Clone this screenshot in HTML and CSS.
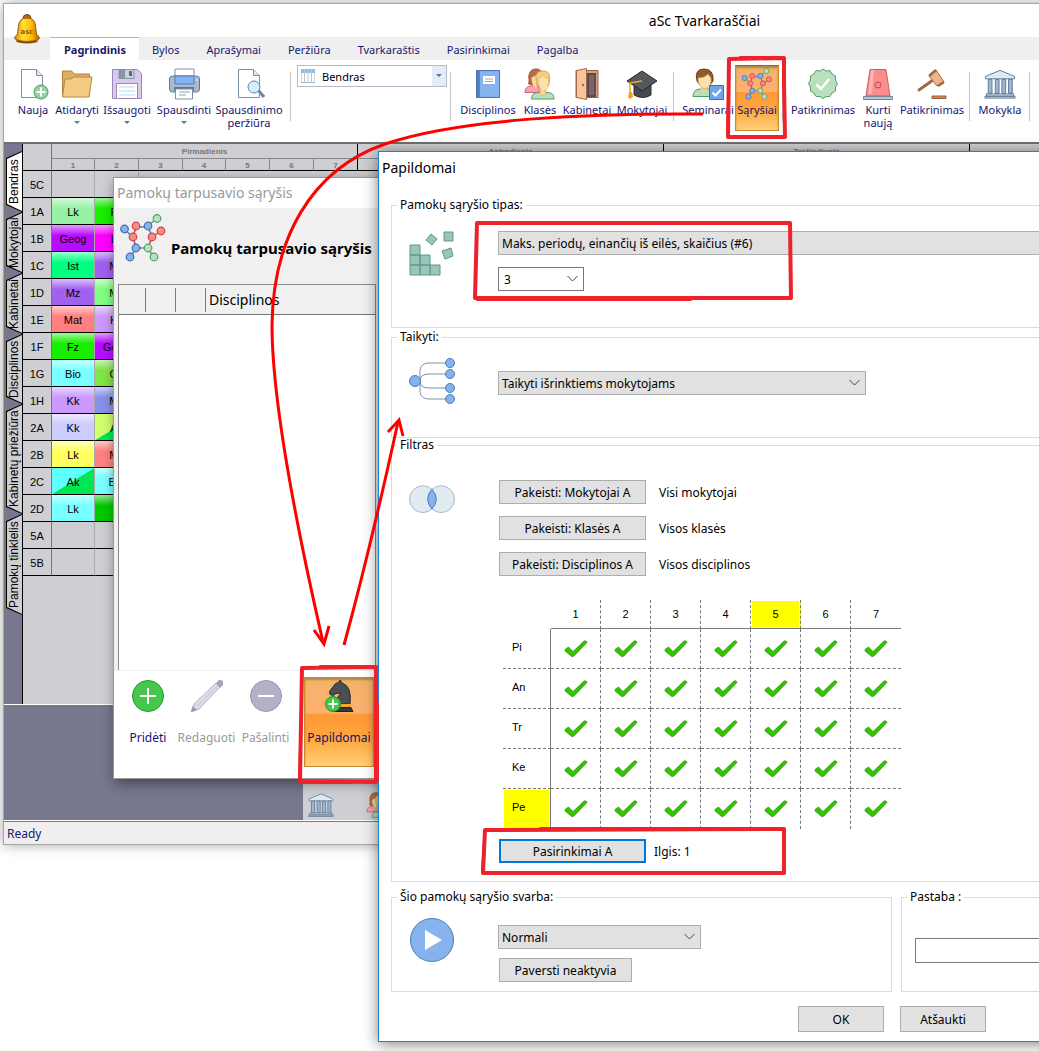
FILE: index.html
```html
<!DOCTYPE html>
<html lang="lt">
<head>
  <meta charset="UTF-8">
  <meta name="viewport" content="width=device-width, initial-scale=1.0">
  <title>aSc Tvarkaraščiai</title>
  <link rel="stylesheet" href="styles.css">
</head>
<body>

<!-- shared icons -->
<svg class="defs" aria-hidden="true">
  <symbol id="check" viewBox="0 0 24 20">
    <path d="M1 10.500 4.500 8l4.500 4.500L20 2q2.500-1 3 1.500L10 17q-2 1.500-3 0L1 12z" fill="#35c203" stroke="#2a9a10" stroke-width=".7"/>
  </symbol>
  <symbol id="molecule" viewBox="0 0 46 48">
    <g stroke="#4f7fb8" stroke-width="1.500" fill="none">
      <path d="M4 15l9 8M16 13h12M32 23l-4-11M10 44l6-10"/>
      <path d="M16 13l-3 10 3 11M32 23l9-6M32 23l-4 11" stroke="#d04848"/>
      <path d="M28 12l9-8M16 34h12l6 10" stroke="#5a9a74"/>
    </g>
    <g stroke-width="1.200">
      <g fill="#86b3ee" stroke="#3e6fb0"><circle cx="4.500" cy="15" r="3.800"/><circle cx="28" cy="12" r="3.800"/><circle cx="16" cy="34" r="3.800"/><circle cx="10" cy="43" r="3.800"/></g>
      <g fill="#f88a8a" stroke="#cf4444"><circle cx="16" cy="12" r="3.800"/><circle cx="41" cy="17" r="3.800"/><circle cx="32" cy="23" r="3.800"/><circle cx="13" cy="23" r="3.800"/></g>
      <g fill="#b8e2bc" stroke="#5a9a74"><circle cx="37" cy="4.500" r="3.800"/><circle cx="28" cy="34" r="3.800"/><circle cx="34" cy="43" r="3.800"/></g>
    </g>
  </symbol>
  <symbol id="people" viewBox="0 0 34 34">
    <path d="M1 26q0-6 6-7h9v7z" fill="#f6a5ae" stroke="#d5556a"/>
    <path d="M5 17q1-4 0-8 1-8 8-8 6 0 6 7l-5 10z" fill="#b96b42" stroke="#8f4c2a"/>
    <path d="M8 10q4-1 6-4l4 4-2 8-4 3q-4-3-4-11z" fill="#fbd9a0"/>
    <path d="M8 33q0-7 7-7h10q7 0 7 7z" fill="#b8e0b8" stroke="#4f9a62"/>
    <path d="M17 22h6v6q-3 3-6 0z" fill="#fbd9a0" stroke="#dba45a" stroke-width=".7"/>
    <path d="M13 14q-2-11 7-11t7 11l-1 5h-12z" fill="#f3cf7c" stroke="#c79a44" stroke-width=".8"/>
    <path d="M15 11q3 0 5-3 3 3 6 3 1 12-5 14-6-2-6-14z" fill="#fde0ae" stroke="#dba45a" stroke-width=".6"/>
  </symbol>
  <symbol id="school" viewBox="0 0 34 32">
    <g fill="#c8d7e6" stroke="#5d7892">
      <path d="M17 1.500 32.500 8v2.500h-31V8z" fill="#dcecf7"/>
      <path d="M4.500 11h4v15h-4zM12 11h4v15h-4zM19 11h4v15h-4zM26 11h4v15h-4z" fill="#9fb7cf"/>
      <path d="M2.500 26.500h29V29h-29zM1 29h32v2H1z"/>
    </g>
  </symbol>
</svg>

<div class="desktop">

  <div class="window main">
    <header class="titlebar">
      <svg class="bell" viewBox="0 0 28 30" aria-hidden="true">
        <defs>
          <linearGradient id="gold"><stop offset="0" stop-color="#d98500"/><stop offset=".35" stop-color="#ffe23a"/><stop offset=".7" stop-color="#ffb400"/><stop offset="1" stop-color="#b35c00"/></linearGradient>
        </defs>
        <ellipse cx="14" cy="27" rx="11" ry="2.500" fill="#8c4a10"/>
        <circle cx="14" cy="4.500" r="4" fill="#b56a10" stroke="#7a4508"/>
        <path d="M14 4q8 0 8.500 8l1 8 3 3.500q1 3-12.500 4-13.500-1-12.500-4l3-3.500 1-8Q6 4 14 4z" fill="url(#gold)" stroke="#a85a08"/>
        <text x="14" y="20" text-anchor="middle" class="bell-text">asc</text>
      </svg>
      <span>aSc Tvarkaraščiai</span>
    </header>

    <nav class="tabs">
      <a href="#" class="active">Pagrindinis</a>
      <a href="#">Bylos</a>
      <a href="#">Aprašymai</a>
      <a href="#">Peržiūra</a>
      <a href="#">Tvarkaraštis</a>
      <a href="#">Pasirinkimai</a>
      <a href="#">Pagalba</a>
    </nav>

    <div class="ribbon">
      <div class="group files">
        <button class="tool">
          <svg viewBox="0 0 32 32"><path d="M4.500 1.500h15l6 6v22h-21z" fill="#fff" stroke="#7d8fa3"/><path d="M19.500 1.500v6h6" fill="#dfe7ef" stroke="#7d8fa3"/><circle cx="24" cy="24" r="7" fill="#92d3a0" stroke="#4f9a62"/><path d="M24 19.500v9M19.500 24h9" stroke="#fff" stroke-width="2"/></svg>
          Nauja
        </button>
        <button class="tool drop">
          <svg viewBox="0 0 32 32"><path d="M1.500 28V3h9l3 3h15v22z" fill="#dfad62" stroke="#b07f3c"/><path d="M1.500 29 4 11h6l3-2h18l-3 20z" fill="#f3cb82" stroke="#b98a45"/></svg>
          Atidaryti
        </button>
        <button class="tool drop">
          <svg viewBox="0 0 32 32"><path d="M1.500 1.500h25l4 4v25h-29z" fill="#d7cbee" stroke="#9c86c0"/><path d="M8 1.500h15v9H8z" fill="#c9d3dc" stroke="#8595a5"/><path d="M8 1.500h6v9H8z" fill="#8795a3"/><path d="M18 3h3v5h-3z" fill="#5b6a78"/><path d="M5.500 15.500h21v15h-21z" fill="#fff" stroke="#9c86c0"/><path d="M8 19h16M8 23h16M8 27h16" stroke="#b5def5"/></svg>
          Išsaugoti
        </button>
        <button class="tool drop">
          <svg viewBox="0 0 32 32"><path d="M7 1h19v10H7z" fill="#fff" stroke="#7d8fa3"/><rect x="1.500" y="8" width="30" height="16" rx="3" fill="#a9bad0" stroke="#5f7896"/><path d="M7 8h19v8H7z" fill="#86b3ee" stroke="#4c7cb8"/><path d="M6 19h20v4H6z" fill="#5f7896"/><path d="M7.500 21h17v10h-17z" fill="#fff" stroke="#7d8fa3"/><path d="M11 24h11M11 27h7" stroke="#8fa3b7"/><circle cx="29" cy="12" r="1" fill="#ffe48a"/></svg>
          Spausdinti
        </button>
        <button class="tool">
          <svg viewBox="0 0 32 32"><path d="M5.500 1.500h15l6 6v22h-21z" fill="#fff" stroke="#7d8fa3"/><path d="M20.500 1.500v6h6" fill="#dfe7ef" stroke="#7d8fa3"/><path d="m25 22 6 7" stroke="#71869b" stroke-width="3"/><circle cx="21" cy="19" r="6" fill="#d4edff" stroke="#5f86ad"/></svg>
          Spausdinimo peržiūra
        </button>
      </div>

      <div class="group view">
        <div class="view-box">
          <svg viewBox="0 0 14 14" aria-hidden="true"><path d="M0 .5h14v13H0z" fill="#fff" stroke="#9fb0c0"/><path d="M0 0h14v4H0z" fill="#8ac0ea"/><path d="M3.500 0v14M7 0v14M10.500 0v14" stroke="#b9c6d2"/></svg>
          <select aria-label="Vaizdas"><option>Bendras</option></select>
        </div>
      </div>

      <div class="group subjects">
        <button class="tool">
          <svg viewBox="0 0 32 32"><path d="M4.500 2.500h23v27h-23z" fill="#86b3ee" stroke="#4474b4"/><path d="M5 3h3v26H5z" fill="#4f80c0"/><path d="M11 8h12v8H11z" fill="#fff"/><path d="M13 11h8M13 13.500h8" stroke="#9aa9b8"/></svg>
          Disciplinos
        </button>
        <button class="tool"><svg viewBox="0 0 34 34"><use href="#people"/></svg>Klasės</button>
        <button class="tool">
          <svg viewBox="0 0 32 32"><path d="M5 2.500h22v27H5z" fill="#d8a07c" stroke="#9a6244"/><path d="M14 5h11v24H14z" fill="#5d4a50"/><path d="M18 7h5v20h-5z" fill="#7b636a"/><path d="m5.500 2.500 10-2v31l-10-2z" fill="#f9c49a" stroke="#a3694a"/><circle cx="12" cy="17" r="1.200" fill="#a3694a"/></svg>
          Kabinetai
        </button>
        <button class="tool">
          <svg viewBox="0 0 32 32"><path d="M8 15h17v12q-8 5-17 0z" fill="#45484c" stroke="#2c2f33"/><path d="M16 3 31 13 16 23 1 13z" fill="#55585c" stroke="#232629"/><path d="m16 13-12 2v10" fill="none" stroke="#f2a126" stroke-width="1.500"/><path d="M3 24h3l1 5-3 2-2-2z" fill="#f2a126"/></svg>
          Mokytojai
        </button>
      </div>

      <div class="group relations">
        <button class="tool">
          <svg viewBox="0 0 32 32"><path d="M1 28.500q0-7 7-7.500h8q6 0 7 7.500z" fill="#b8e0b8" stroke="#4f9a62"/><path d="M9 17h6v6q-3 2-6 0z" fill="#f5cf96"/><path d="M5 13Q2 1 12 1t9 12l-3 4H8z" fill="#92592f" stroke="#6d3e1c"/><path d="M6 10q7 0 10-4l3 4q1 9-6 11-7-2-7-11z" fill="#fde0ae" stroke="#cf9c58" stroke-width=".7"/><path d="M17.500 17.500h14v14h-14z" fill="#6fa5ec" stroke="#3e6fb0"/><path d="m20.500 24.500 3 3 5.500-6" fill="none" stroke="#fff" stroke-width="2"/></svg>
          Seminarai
        </button>
        <button class="tool pressed"><svg viewBox="0 0 46 48"><use href="#molecule"/></svg>Sąryšiai</button>
      </div>

      <div class="group checks">
        <button class="tool">
          <svg viewBox="0 0 32 32"><path d="m16 1 3 2 4-.5 2 3.500 3.500 2 0 4 2 3.500-2 3.500 0 4-3.500 2-2 3.500-4 0-3 2-3-2-4 0-2-3.500-3.500-2 0-4-2-3.500 2-3.500 0-4L7 6l2-3.500 4 .5z" fill="#b8e0bc" stroke="#5a9a74"/><path d="m9.500 16.500 4.500 4.500L22 11" fill="none" stroke="#fff" stroke-width="2.500"/></svg>
          Patikrinimas
        </button>
        <button class="tool">
          <svg viewBox="0 0 32 32"><path d="M8 1.500h16L28 28H4z" fill="#f98e8e" stroke="#dd5757"/><path d="m9 2-3 24h4l2-24z" fill="#fcb4b4"/><circle cx="16" cy="17" r="3" fill="none" stroke="#d04545"/><path d="M1.500 28.500h29v3h-29z" fill="#b8c4d2" stroke="#71869b"/></svg>
          Kurti naują
        </button>
        <button class="tool">
          <svg viewBox="0 0 32 32"><path d="M3 22 17 12" stroke="#a5673f" stroke-width="3" stroke-linecap="round"/><path d="m13 8 7-6 8 12-7 4z" fill="#f0b48c" stroke="#a5673f"/><path d="m13 8 7-6M22 18l6-4" stroke="#a5673f" stroke-width="2.500"/><path d="M16 28h14v2.500H16z" fill="#c98a5e" stroke="#9a5f3b"/></svg>
          Patikrinimas
        </button>
      </div>

      <div class="group schools">
        <button class="tool"><svg viewBox="0 0 34 32"><use href="#school"/></svg>Mokykla</button>
      </div>
    </div>

    <div class="workspace">
      <nav class="side-tabs">
        <button class="t1 active"><span>Bendras</span></button>
        <button class="t1"><span>Mokytojai</span></button>
        <button class="t1"><span>Kabinetai</span></button>
        <button class="t2"><span>Disciplinos</span></button>
        <button class="t4"><span>Kabinetų priežiūra</span></button>
        <button class="t3"><span>Pamokų tinklelis</span></button>
      </nav>

      <table class="timetable">
        <colgroup>
          <col class="head"><col class="narrow"><col><col><col class="narrow"><col><col><col>
          <col class="day"><col class="day"><col class="day">
        </colgroup>
        <thead>
          <tr class="days"><th rowspan="2"></th><th colspan="7">Pirmadienis</th><th>Antradienis</th><th>Trečiadienis</th><th></th></tr>
          <tr class="periods"><th>1</th><th>2</th><th>3</th><th>4</th><th>5</th><th>6</th><th>7</th><th></th><th></th><th></th></tr>
        </thead>
        <tbody>
          <tr><th>5C</th><td></td><td></td><td colspan="8"></td></tr>
          <tr><th>1A</th><td class="c mint">Lk</td><td class="c green">Fz</td><td colspan="8"></td></tr>
          <tr><th>1B</th><td class="c purple">Geog</td><td class="c magenta">Lk</td><td colspan="8"></td></tr>
          <tr><th>1C</th><td class="c spring">Ist</td><td class="c violet">Mz</td><td colspan="8"></td></tr>
          <tr><th>1D</th><td class="c violet">Mz</td><td class="c light-green">Mz</td><td colspan="8"></td></tr>
          <tr><th>1E</th><td class="c salmon">Mat</td><td class="c lilac">Kk</td><td colspan="8"></td></tr>
          <tr><th>1F</th><td class="c green">Fz</td><td class="c purple">Geog</td><td colspan="8"></td></tr>
          <tr><th>1G</th><td class="c cyan">Bio</td><td class="c lime">Ch</td><td colspan="8"></td></tr>
          <tr><th>1H</th><td class="c lilac">Kk</td><td class="c blue">Mz</td><td colspan="8"></td></tr>
          <tr><th>2A</th><td class="c lavender">Kk</td><td class="c split-lime">Ak</td><td colspan="8"></td></tr>
          <tr><th>2B</th><td class="c yellow">Lk</td><td class="c salmon">Mz</td><td colspan="8"></td></tr>
          <tr><th>2C</th><td class="c split-cyan">Ak</td><td class="c cyan">Bio</td><td colspan="8"></td></tr>
          <tr><th>2D</th><td class="c cyan">Lk</td><td class="c dark-green">It</td><td colspan="8"></td></tr>
          <tr><th>5A</th><td></td><td></td><td colspan="8"></td></tr>
          <tr><th>5B</th><td></td><td></td><td colspan="8"></td></tr>
        </tbody>
      </table>
    </div>

    <div class="lower">
      <div class="tray">
        <svg viewBox="0 0 34 32"><use href="#school"/></svg>
        <svg viewBox="0 0 34 34"><use href="#people"/></svg>
      </div>
    </div>
    <footer class="status">Ready</footer>
  </div>

  <section class="window relations-dialog">
    <div class="caption">Pamokų tarpusavio sąryšis</div>
    <div class="relations-head">
      <svg viewBox="0 0 46 48" aria-hidden="true"><use href="#molecule"/></svg>
      <h2>Pamokų tarpusavio sąryšis</h2>
    </div>
    <div class="list">
      <div class="list-head"><i></i><i></i><i></i><span>Disciplinos</span></div>
    </div>
    <div class="actions">
      <button class="action">
        <svg viewBox="0 0 32 32"><circle cx="16" cy="16" r="15.500" fill="#46c64c" stroke="#17a020"/><path d="M16 8v16M8 16h16" stroke="#fff" stroke-width="2"/></svg>
        Pridėti
      </button>
      <button class="action" disabled>
        <svg viewBox="0 0 32 32"><path d="m3 24 22-21 4 4L8 29l-8 3z" fill="#dedde6" stroke="#b4b2c2"/><path d="m25 3 3-3q6 0 4 5l-3 3z" fill="#a5a3b6"/><path d="m2 26 4 4-6 2z" fill="#9c9aae"/><path d="M5.500 26.500 27 5.500" stroke="#c3c1d0"/></svg>
        Redaguoti
      </button>
      <button class="action" disabled>
        <svg viewBox="0 0 32 32"><circle cx="16" cy="16" r="15.500" fill="#b4b1c6" stroke="#9996b0"/><path d="M8 16h16" stroke="#fff" stroke-width="2"/></svg>
        Pašalinti
      </button>
      <button class="action pressed">
        <svg viewBox="0 0 32 32"><path d="M17 0l2 3q10 3 8 21H13q0-6 5-11l-5 .5-3 2-3-1-.5-3 6-8 3-1z" fill="#4b4e52" stroke="#2a2c2f"/><path d="M13 24h15v3H13z" fill="#f5a52c"/><path d="M12 27.500h16l2 4H10z" fill="#37393c" stroke="#222"/><circle cx="10" cy="24" r="7.500" fill="#46c64c" stroke="#17a020"/><path d="M10 19.500v9M5.500 24h9" stroke="#fff" stroke-width="2"/></svg>
        Papildomai
      </button>
    </div>
  </section>

  <form class="window details">
    <div class="caption">Papildomai</div>

    <fieldset class="type">
      <legend>Pamokų sąryšio tipas:</legend>
      <svg class="pic" viewBox="0 0 46 46" aria-hidden="true">
        <g fill="#9bc5b8" stroke="#5b9a8a"><path d="M1 14h10v10H1zM1 24h10v10H1zM11 24h10v10H11zM1 34h10v10H1zM11 34h10v10H11zM21 34h10v10H21zM35 1h9v9h-9zM22 3l6 5-5 6-6-5zM33 20l9-3 2 8-8 3z"/></g>
      </svg>
      <div class="stack">
        <select class="wide" aria-label="Pamokų sąryšio tipas"><option>Maks. periodų, einančių iš eilės, skaičius (#6)</option></select>
        <select class="count" aria-label="Skaičius"><option>3</option></select>
      </div>
    </fieldset>

    <fieldset class="apply">
      <legend>Taikyti:</legend>
      <svg class="pic" viewBox="0 0 46 46" aria-hidden="true">
        <path d="M11 23V12q1-7 9-7h16M11 23q0-7 9-7h16M11 23q0 7 9 7h16M11 23v11q1 7 9 7h16" fill="none" stroke="#7d93a8"/>
        <g fill="#86b3ee" stroke="#4c7cb8"><circle cx="6" cy="23" r="5.500"/><circle cx="41" cy="5" r="4.500"/><circle cx="41" cy="16" r="4.500"/><circle cx="41" cy="30" r="4.500"/><circle cx="41" cy="41" r="4.500"/></g>
      </svg>
      <select class="teachers" aria-label="Taikyti"><option>Taikyti išrinktiems mokytojams</option></select>
    </fieldset>

    <fieldset class="filter">
      <legend>Filtras</legend>
      <svg class="pic" viewBox="0 0 48 46" aria-hidden="true">
        <g fill="#e0eaf1" stroke="#a3b7cb"><circle cx="14.500" cy="19" r="14"/><circle cx="33.500" cy="19" r="14"/></g>
        <path d="M24 8.700q9 10 0 20.600q-9-10.600 0-20.600z" fill="#86b3ee" stroke="#4c7cb8"/>
      </svg>
      <div class="stack">
        <div class="line"><button type="button" class="btn change">Pakeisti: Mokytojai A</button>Visi mokytojai</div>
        <div class="line"><button type="button" class="btn change">Pakeisti: Klasės A</button>Visos klasės</div>
        <div class="line"><button type="button" class="btn change">Pakeisti: Disciplinos A</button>Visos disciplinos</div>

        <table class="week">
          <thead>
            <tr><td></td><th>1</th><th>2</th><th>3</th><th>4</th><th class="mark">5</th><th>6</th><th>7</th></tr>
          </thead>
          <tbody>
            <tr><th>Pi</th><td><svg><use href="#check"/></svg></td><td><svg><use href="#check"/></svg></td><td><svg><use href="#check"/></svg></td><td><svg><use href="#check"/></svg></td><td><svg><use href="#check"/></svg></td><td><svg><use href="#check"/></svg></td><td><svg><use href="#check"/></svg></td></tr>
            <tr><th>An</th><td><svg><use href="#check"/></svg></td><td><svg><use href="#check"/></svg></td><td><svg><use href="#check"/></svg></td><td><svg><use href="#check"/></svg></td><td><svg><use href="#check"/></svg></td><td><svg><use href="#check"/></svg></td><td><svg><use href="#check"/></svg></td></tr>
            <tr><th>Tr</th><td><svg><use href="#check"/></svg></td><td><svg><use href="#check"/></svg></td><td><svg><use href="#check"/></svg></td><td><svg><use href="#check"/></svg></td><td><svg><use href="#check"/></svg></td><td><svg><use href="#check"/></svg></td><td><svg><use href="#check"/></svg></td></tr>
            <tr><th>Ke</th><td><svg><use href="#check"/></svg></td><td><svg><use href="#check"/></svg></td><td><svg><use href="#check"/></svg></td><td><svg><use href="#check"/></svg></td><td><svg><use href="#check"/></svg></td><td><svg><use href="#check"/></svg></td><td><svg><use href="#check"/></svg></td></tr>
            <tr><th class="mark">Pe</th><td><svg><use href="#check"/></svg></td><td><svg><use href="#check"/></svg></td><td><svg><use href="#check"/></svg></td><td><svg><use href="#check"/></svg></td><td><svg><use href="#check"/></svg></td><td><svg><use href="#check"/></svg></td><td><svg><use href="#check"/></svg></td></tr>
          </tbody>
        </table>

        <div class="line tight"><button type="button" class="btn change focused">Pasirinkimai A</button>Ilgis: 1</div>
      </div>
    </fieldset>

    <div class="bottom">
      <fieldset class="weight">
        <legend>Šio pamokų sąryšio svarba:</legend>
        <svg class="pic" viewBox="0 0 46 46" aria-hidden="true"><circle cx="23" cy="23" r="21.500" fill="#86b3ee" stroke="#4c7cb8"/><path d="m16 13 17 10-17 10z" fill="#fff"/></svg>
        <div class="stack">
          <select class="normal" aria-label="Svarba"><option>Normali</option></select>
          <button type="button" class="btn inactive">Paversti neaktyvia</button>
        </div>
      </fieldset>
      <fieldset class="note">
        <legend>Pastaba :</legend>
        <input type="text" aria-label="Pastaba">
      </fieldset>
    </div>

    <div class="buttons">
      <button type="button" class="btn">OK</button>
      <button type="button" class="btn">Atšaukti</button>
    </div>
  </form>

  <!-- red marker drawings over the windows -->
  <svg class="marker" viewBox="0 0 1039 1051" aria-hidden="true">
    <g class="arrow">
      <path d="M703 114C600 113 460 118 385 144C310 170 273 240 272 325C272 400 295 520 323 642"/>
      <path d="M314 630l10 14 5-18"/>
      <path d="M344 645Q370 550 398 422"/>
      <path d="M388 432l11-12 4 16"/>
    </g>
    <g class="box">
      <path d="M729 59L784 58 784 84 785 137 728 137z"/>
      <path d="M740 57h44M785 84v52M729 138h38M727 136l2-70"/>
      <path d="M477 223L790 223 791 298 475 298z"/>
      <path d="M500 222h289M791 247v51M477 300h214M475 296l2-60"/>
      <path d="M302 668L376 667 376 782 300 781z"/>
      <path d="M320 666h56M378 703v78M302 783h50M299 780l2-70"/>
      <path d="M485 830L784 829 784 873 483 873z"/>
      <path d="M540 828h243M785 843v30M485 874h204M482 870l2-30"/>
    </g>
  </svg>
</div>

</body>
</html>
```
FILE: styles.css
```css
* { box-sizing: border-box; }

body {
  margin: 0;
  background: #fff;
  font-family: "Noto Sans", "Open Sans", sans-serif;
  font-size: 12px;
  color: #000;
}

button, select, input { font: inherit; color: inherit; }
button { padding: 0; }

.defs { display: none; }

.desktop {
  position: relative;
  min-height: 100vh;
  overflow: hidden;
}

.window { position: absolute; }

/* main window */
.main {
  left: 3px;
  right: -367px;
  top: 3px;
  border: 1px solid #a5a5a5;
  background: #fff;
  box-shadow: 0 0 12px rgba(0, 0, 0, .35);
}

.titlebar {
  position: relative;
  height: 33px;
  display: flex;
  align-items: center;
  justify-content: center;
  font-size: 14px;
}

.bell {
  position: absolute;
  left: 9px;
  top: 10px;
  width: 28px;
  height: 30px;
}

.bell-text {
  font: bold 7px "DejaVu Sans", sans-serif;
  fill: #9a5a08;
}

.tabs {
  display: flex;
  height: 23px;
  padding-left: 46px;
  background: #efefef;
}

.tabs a {
  padding: 0 14px 0 13px;
  font-size: 11px;
  line-height: 26px;
  color: #15206c;
  text-decoration: none;
}

.tabs .active {
  padding: 0 13px 0 14px;
  background: #fff;
  border-top: 1px solid #b5b5b5;
  font-weight: bold;
  line-height: 24px;
}

.ribbon {
  display: flex;
  height: 82px;
  padding-left: 7px;
}

.group {
  position: relative;
  display: grid;
  align-items: start;
  padding: 5px 6px 0 6px;
}

.group::after {
  content: "";
  position: absolute;
  right: 0;
  top: 12px;
  height: 49px;
  border-right: 1px solid #c3c3c3;
}

.files { grid-template-columns: 44px 44px 56px 58px 72px; padding-left: 0; }
.view { grid-template-columns: 150px; padding-right: 4px; }
.subjects { grid-template-columns: 62px 42px 52px 58px; padding-right: 3px; }
.relations { grid-template-columns: 54px 44px; padding-left: 7px; padding-right: 4px; }
.checks { grid-template-columns: 64px 46px 62px; padding-left: 8px; padding-right: 7px; }
.schools { grid-template-columns: 48px; }

.tool, .action {
  display: flex;
  flex-direction: column;
  align-items: center;
  border: 0;
  background: none;
  color: #15156e;
}

.tool {
  height: 66px;
  font-size: 11px;
  line-height: 13px;
}

.tool svg {
  flex: none;
  width: 32px;
  height: 32px;
  margin: 3px 0;
}

.drop::after {
  content: "";
  margin-top: 5px;
  border: 3px solid transparent;
  border-top-color: #4a7ab8;
  border-bottom: 0;
}

.pressed {
  background: linear-gradient(#f0b468, #ffb070 40%, #ff9838 41%, #ffa83c 70%, #ffd07a);
  border: 1px solid #c98a2c;
  border-top-color: #8a6c3c;
  box-shadow: inset 0 2px 2px rgba(90, 60, 10, .4);
}

.tool.pressed svg { margin-top: 2px; }

.view-box {
  display: flex;
  align-items: center;
  height: 22px;
  padding-left: 3px;
  border: 1px solid #b4bccb;
}

.view-box svg { width: 14px; height: 14px; }

.view-box select {
  flex: 1;
  height: 20px;
  padding: 0 7px;
  border: 0;
  appearance: none;
  font-size: 11px;
  background: url("data:image/svg+xml,%3Csvg xmlns='http://www.w3.org/2000/svg' width='14' height='20'%3E%3Cpath d='M0 0h14v20H0z' fill='%23e6ebf5'/%3E%3Cpath d='M4 8h6l-3 3z' fill='%234a7ab8'/%3E%3C/svg%3E") right no-repeat #fff;
}

.workspace {
  display: flex;
  height: 562px;
  border-top: 2px solid #6f6f72;
  border-left: 1px solid #777;
  background: #cfced3;
}

.side-tabs {
  width: 18px;
  padding: 7px 0 0 1px;
  background: #77778f;
  border-right: 1px solid #000;
  display: flex;
  flex-direction: column;
}

.side-tabs button {
  border: 0;
  background: #000;
  padding: 1px 0 1px 1px;
  font: 12px/14px "Liberation Sans", Arial, sans-serif;
  clip-path: polygon(0 7px, 100% 0, 100% 100%, 0 calc(100% - 7px));
}

.side-tabs span {
  display: block;
  width: 100%;
  height: 100%;
  writing-mode: vertical-rl;
  transform: rotate(180deg);
  text-align: center;
  background: #cfced3;
  clip-path: polygon(0 0, 100% 7px, 100% calc(100% - 7px), 0 100%);
}

.side-tabs .active span { background: #fff; }
.t1 { height: 61px; }
.t2 { height: 70px; }
.t3 { height: 101px; }
.t4 { height: 110px; }

.timetable {
  align-self: flex-start;
  width: 1253px;
  table-layout: fixed;
  border-spacing: 0;
  font: 11px "Liberation Sans", Arial, sans-serif;
}

.timetable col { width: 44px; }
.timetable .narrow { width: 43px; }
.timetable .head { width: 29px; }
.timetable .day { width: 306px; }

.timetable th, .timetable td {
  padding: 1px 0 0;
  text-align: center;
  border-right: 1px solid #aaa;
  border-bottom: 1px solid #000;
  font-weight: normal;
}

.timetable tbody tr { height: 27px; }
.timetable tbody th { border-right-color: #777; }

.timetable thead th {
  color: #77777c;
  font-size: 8px;
  font-weight: bold;
}

.timetable .days { height: 15px; }
.timetable .periods { height: 12px; }
.timetable .days th { border-right-color: #000; border-bottom-color: #888; }
.timetable .days th:first-child { border-right-color: #777; border-bottom-color: #000; }
.timetable .periods th { border-right-color: #888; }
.timetable .periods th:nth-child(n+7) { border-right-color: #000; }

.c { background-image: linear-gradient(rgba(255, 255, 255, .6), rgba(255, 255, 255, 0) 40%); }
.mint { background-color: #96f0a6; }
.green { background-color: #18ee00; }
.purple { background-color: #b80cff; }
.magenta { background-color: #ff00ff; }
.spring { background-color: #00ff80; }
.violet { background-color: #a060f0; }
.light-green { background-color: #80ff80; }
.salmon { background-color: #ff8080; }
.lilac { background-color: #cc99ff; }
.cyan { background-color: #78ffff; }
.lime { background-color: #80e548; }
.blue { background-color: #8890e8; }
.lavender { background-color: #ccccff; }
.yellow { background-color: #ffff60; }
.dark-green { background-color: #00c800; }
.split-lime { background-image: linear-gradient(to bottom right, #d0ff70 50%, #00e650 51%); }
.split-cyan { background-image: linear-gradient(to bottom right, #60ffff 50%, #00e650 51%); }

.lower {
  height: 115px;
  margin-top: 1px;
  border-top: 2px solid #77778a;
  background: #77778d;
  display: flex;
  align-items: flex-end;
  padding-left: 299px;
}

.tray {
  flex: 1;
  height: 42px;
  padding: 14px 5px 0;
  display: flex;
  gap: 32px;
  background: #cfced3;
}

.tray svg { width: 26px; height: 26px; }

.status {
  height: 23px;
  margin-top: 1px;
  padding-left: 3px;
  border-top: 1px solid #77778d;
  background: #f0eeee;
  line-height: 24px;
  color: #15206c;
}

/* relations window */
.relations-dialog {
  left: 113px;
  top: 177px;
  width: 268px;
  border: 1px solid #999;
  background: #f0f0f0;
  box-shadow: 2px 4px 12px rgba(0, 0, 0, .45);
}

.caption { padding: 0 3px; font-size: 14px; line-height: 30px; white-space: nowrap; }

.relations-dialog .caption {
  background: #fff;
  color: #999;
}

.relations-head {
  display: flex;
  gap: 5px;
  height: 76px;
  padding: 6px 6px 0;
}

.relations-head svg { flex: none; width: 46px; height: 48px; }

.relations-head h2 {
  margin: 22px 0 0;
  font-size: 15px;
  line-height: 24px;
  white-space: nowrap;
}

.list {
  height: 386px;
  margin: 0 4px 1px;
  border: 1px solid #8a8a8a;
  border-bottom: 0;
  background: #fff;
}

.list-head {
  display: flex;
  align-items: center;
  height: 30px;
  background: #f0f0f0;
  border-bottom: 1px solid #777;
  font-size: 14px;
}

.list-head i {
  flex: none;
  width: 30px;
  height: 24px;
  border-right: 1px solid #77778d;
}

.list-head i:first-child { width: 27px; }
.list-head span { padding-left: 3px; }

.actions {
  display: grid;
  grid-template-columns: 58px 59px 59px 88px;
  height: 107px;
  padding: 6px 0 0 5px;
  background: #fff;
}

.action {
  height: 90px;
  padding-top: 3px;
  font-size: 12px;
  line-height: 18px;
}

.action:disabled { color: #999; }
.action svg { flex: none; width: 32px; height: 32px; margin-bottom: 17px; }

.action.pressed {
  width: 70px;
  justify-self: center;
  padding-top: 2px;
  border: 1px solid #c98a2c;
}

/* details window */
.details {
  left: 378px;
  right: -40px;
  top: 151px;
  height: 891px;
  padding: 0 0 0 12px;
  border: 1px solid #1b83d6;
  background: #fff;
  box-shadow: 0 2px 14px rgba(0, 0, 0, .5);
}

.details .caption {
  margin-left: -12px;
  height: 44px;
  line-height: 32px;
}

.details fieldset {
  display: grid;
  grid-template-columns: 89px 1fr;
  align-items: start;
  margin: 0;
  padding: 0 0 0 17px;
  border: 1px solid #dcdcdc;
}

.details legend {
  margin-left: -12px;
  padding: 0 3px;
  line-height: 18px;
}

.pic { width: 46px; height: 46px; }

.stack {
  display: flex;
  flex-direction: column;
  align-items: flex-start;
  gap: 12px;
}

.details .type { height: 132px; padding-top: 17px; }
.details .apply { height: 110px; padding-top: 12px; }
.details .apply select { margin-top: 13px; }
.details .filter { height: 446px; margin-top: -2px; padding-top: 26px; }
.details .weight { width: 501px; height: 104px; padding-top: 11px; }
.weight .stack { padding-top: 8px; gap: 9px; }

.details select {
  height: 24px;
  padding: 0 3px;
  border: 1px solid #adadad;
  border-radius: 0;
  appearance: none;
  background: url("data:image/svg+xml,%3Csvg xmlns='http://www.w3.org/2000/svg' width='20' height='8'%3E%3Cpath d='M4.500 1l5 5 5-5' fill='none' stroke='%23444'/%3E%3C/svg%3E") right center no-repeat #e1e1e1;
}

.details .wide { width: 100%; }
.details .count { width: 86px; padding-left: 5px; border-color: #777; background-color: #fff; }
.teachers { width: 368px; }
.normal { width: 203px; }

.btn {
  height: 24px;
  border: 1px solid #adadad;
  background: #e1e1e1;
}

.change { width: 147px; }
.inactive { width: 133px; margin-left: 1px; }
.focused { border: 2px solid #0078d7; }

.line {
  display: flex;
  align-items: center;
  gap: 13px;
  padding-left: 1px;
}

.tight { gap: 8px; }

.week {
  margin: 12px 0 -2px 5px;
  border-spacing: 0;
  table-layout: fixed;
  width: 398px;
  font: 11px "Liberation Sans", Arial, sans-serif;
}

.week th, .week td {
  height: 40px;
  padding: 0;
  border-right: 1px dashed #777;
  border-bottom: 1px dashed #777;
  font-weight: normal;
  text-align: center;
  vertical-align: middle;
}

.week th:last-child, .week td:last-child { border-right: 0; }
.week tbody tr:last-child th, .week tbody tr:last-child td { border-bottom: 0; }
.week thead th, .week thead td { height: 29px; border-bottom: 1px solid #777; }
.week thead td:first-child { width: 48px; border: 0; }
.week tbody th { padding: 0 0 4px 9px; text-align: left; border-right: 1px solid #777; }
.week .mark { background: #ff0; box-shadow: inset 0 0 0 1px #fff; }
.week svg { display: block; width: 24px; height: 20px; margin: 0 auto; }

.bottom {
  display: flex;
  gap: 9px;
  margin-top: 6px;
}

.details .note {
  flex: 1;
  display: block;
  height: 104px;
  padding: 32px 0 0 13px;
}

.note legend { margin-left: -8px; }

.note input {
  width: 100%;
  height: 25px;
  border: 1px solid #7a7a7a;
}

.buttons {
  display: flex;
  gap: 16px;
  padding: 14px 0 0 407px;
}

.buttons .btn { width: 86px; height: 26px; }

/* red marker */
.marker {
  position: absolute;
  left: 0;
  top: 0;
  width: 1039px;
  height: 1051px;
  pointer-events: none;
  fill: none;
}

.arrow { stroke: #f00; stroke-width: 3; }
.box { stroke: #ee222b; stroke-width: 4; stroke-linejoin: round; stroke-linecap: round; }
.box path:nth-child(even) { stroke-width: 2; }
```
